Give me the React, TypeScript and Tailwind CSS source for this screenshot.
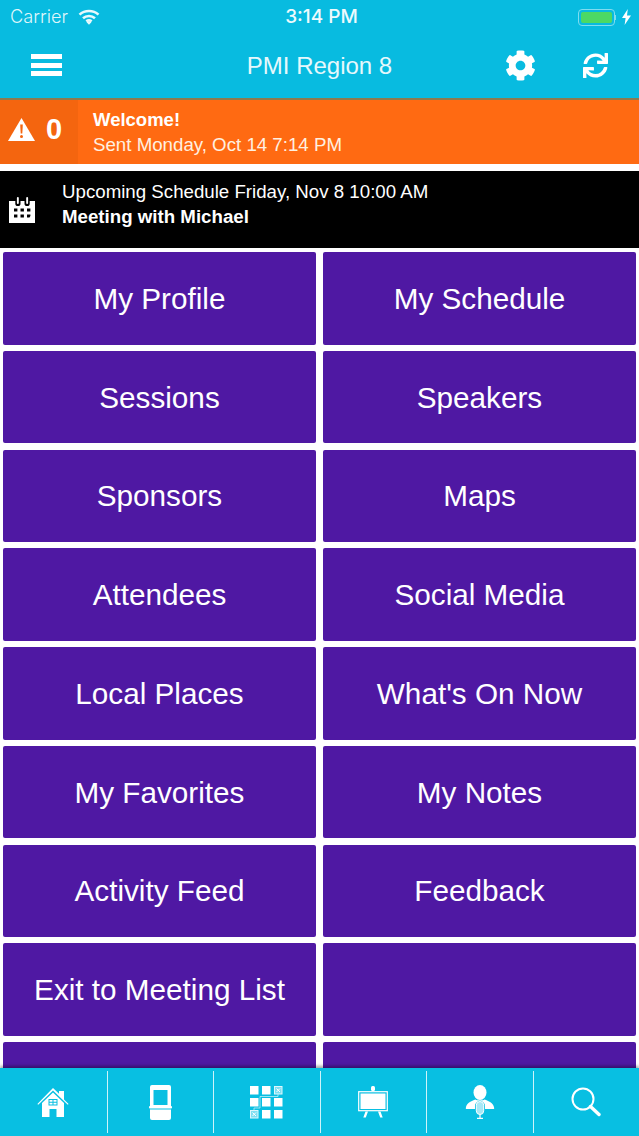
import { FaCog, FaSync } from "react-icons/fa";

const items = [
  "My Profile", "My Schedule", "Sessions", "Speakers", "Sponsors", "Maps", "Attendees", "Social Media",
  "Local Places", "What's On Now", "My Favorites", "My Notes", "Activity Feed", "Feedback", "Exit to Meeting List", "", "", "",
];

function Wifi() {
  return (
    <svg width="22" height="16" viewBox="0 0 22 16" fill="none" stroke="#e8f9fc" strokeWidth="2.6">
      <path d="M1.500 5.600C6.800.7 15.200.7 20.500 5.600" />
      <path d="M5 9.200c3.400-3 8.600-3 12 0" />
      <path d="M8.300 12.400c1.600-1.200 3.800-1.200 5.400 0" />
      <path d="M11 15.800 8.600 13.200c1.300-.9 3.500-.9 4.800 0z" fill="#e8f9fc" stroke="none" />
    </svg>
  );
}

function Battery() {
  return (
    <div className="flex items-center gap-[6px]">
      <div className="flex items-center">
        <div className="w-[37px] h-[17px] rounded-[4px] border border-[#7fdcf0] p-[2px]">
          <div className="w-full h-full rounded-[2px] bg-[#4cd964]" />
        </div>
        <div className="w-[1.5px] h-[5px] bg-[#7fdcf0]" />
      </div>
      <svg width="9" height="16" viewBox="0 0 9 16" fill="#fff">
        <path d="M5.800 0 0 9h3.600L2.600 16 9 6.400H5z" />
      </svg>
    </div>
  );
}

function Warning() {
  return (
    <svg width="27" height="23" viewBox="0 0 27 23">
      <path d="M13.500 0 27 23H0z" fill="#fff" />
      <path d="M12.200 6.500h2.600l-.5 9h-1.600z" fill="#f4650f" />
      <circle cx="13.500" cy="18.500" r="1.500" fill="#f4650f" />
    </svg>
  );
}

function Calendar() {
  return (
    <svg width="27" height="27" viewBox="0 0 27 27" fill="#fff">
      <path fillRule="evenodd" d="M0 5h6.300v2.500a2.600 2.600 0 0 0 5.200 0V5h4v2.500a2.600 2.600 0 0 0 5.200 0V5H26v22H0zM5 12.500v3h3.400v-3zm6.500 0v3h3.400v-3zm6.500 0v3h3.400v-3zM5 18.500v3h3.400v-3zm6.500 0v3h3.400v-3zm6.500 0v3h2.500l.9-1.500v-1.500z" />
      <rect x="7.900" y="1" width="1.900" height="7" rx=".95" />
      <rect x="17.200" y="1" width="1.900" height="7" rx=".95" />
    </svg>
  );
}

function Home() {
  return (
    <svg width="32" height="29" viewBox="0 0 32 29" fill="#fff">
      <path d="M22 3h5v8.600l4.600 4.400-.8.800L16 2.600 1.200 16.800l-.8-.8L16 0l6 5.700z" />
      <path fillRule="evenodd" d="M16 4.600 27 15v14h-7.500v-8h-7v8H5V15zM11.500 11v6.500h9V11z" />
      <path d="M12.500 12h3v1.800h-3zM16.500 12h3v1.800h-3zM12.500 14.800h3v1.700h-3zM16.500 14.800h3v1.700h-3z" />
    </svg>
  );
}

function Phone() {
  return (
    <svg width="23" height="35" viewBox="0 0 23 35" fill="#fff">
      <path fillRule="evenodd" d="M3 0h17a2 2 0 0 1 2 2v19H1V2a2 2 0 0 1 2-2zm1.500 5v15h14V5z" />
      <rect x="0" y="21" width="23" height="2.500" rx="1" />
      <path d="M1 24.500h21V33a2 2 0 0 1-2 2H3a2 2 0 0 1-2-2z" />
    </svg>
  );
}

function AgendaGrid() {
  const solid = [[0, 0], [12, 0], [0, 12], [12, 12], [24, 12], [12, 24], [24, 24]];
  return (
    <svg width="33" height="33" viewBox="0 0 33 33" fill="#fff">
      {solid.map(([x, y]) => (
        <rect key={`${x}-${y}`} x={x} y={y} width="8.500" height="8.500" />
      ))}
      <rect x="24.500" y=".5" width="7.500" height="7.500" fill="#7fdff2" stroke="#dff7fc" />
      <rect x=".5" y="24.500" width="7.500" height="7.500" fill="#7fdff2" stroke="#dff7fc" />
      <path d="M26.500 2.500l3.500 3.500m0-3.500-3.500 3.500M2.500 26.500l3.500 3.500m0-3.500-3.500 3.500" stroke="#fff" strokeWidth="1" />
      <path d="M28 8v2.500H10V22H4v2.500" fill="none" stroke="#bfeef8" strokeWidth=".8" />
    </svg>
  );
}

function Board() {
  return (
    <svg width="30" height="32" viewBox="0 0 30 32" fill="#fff">
      <rect x="13" y="0" width="4" height="5" rx="1.500" />
      <rect x=".7" y="5.700" width="28.600" height="19" fill="none" stroke="#fff" strokeWidth="1.200" />
      <rect x="2.500" y="7.500" width="25" height="15.500" />
      <path d="M7.500 25.500h2.500L7.800 31.500H5.300zM20 25.500h2.500l2.200 6h-2.500z" />
    </svg>
  );
}

function Speaker() {
  return (
    <svg width="30" height="34" viewBox="0 0 30 34" fill="#fff">
      <ellipse cx="15" cy="7.500" rx="6.500" ry="7.500" />
      <path d="M10.500 14.500c1.300 1.200 7.700 1.200 9 0 4 1.500 8.700 3 9.700 8.500.1.700-.2 1-.9 1H20V21a5 5 0 0 0-10 0v3H1.700c-.7 0-1-.3-.9-1 1-5.500 5.700-7 9.700-8.500z" />
      <rect x="11.300" y="16.500" width="7.400" height="13" rx="3.700" fill="#a8e7f5" stroke="#fff" strokeWidth="1" />
      <path d="M15 29.500V33M12 33.400h6" stroke="#fff" strokeWidth="1.200" fill="none" />
    </svg>
  );
}

function Search() {
  return (
    <svg width="30" height="30" viewBox="0 0 30 30" fill="none" stroke="#fff">
      <circle cx="12" cy="12" r="10.500" strokeWidth="2" />
      <path d="m19.500 19.500 8.500 8" strokeWidth="3.400" strokeLinecap="round" />
    </svg>
  );
}

const tabs = [<Home />, <Phone />, <AgendaGrid />, <Board />, <Speaker />, <Search />];

export default function App() {
  return (
    <div className="w-[639px] h-[1136px] overflow-hidden flex flex-col bg-white font-['Liberation_Sans',sans-serif]">
      <header className="h-[100px] shrink-0 flex flex-col bg-[#08bbe0] border-b-2 border-[#8c7a4e] text-white">
        <div className="h-[33px] shrink-0 flex items-center justify-between pl-[10px] pr-[8px] pt-[1px]">
          <div className="w-[200px] flex items-center gap-[10px] text-[18.2px] text-[#dff6fb] font-['Inter',sans-serif] font-light">
            <span>Carrier</span>
            <Wifi />
          </div>
          <div className="pl-[2px] text-[19px] font-medium font-['Inter',sans-serif] text-[#eefafd]">3:14 PM</div>
          <div className="w-[200px] flex justify-end">
            <Battery />
          </div>
        </div>
        <div className="flex-1 flex items-center justify-between pl-[31px] pr-[31px] pb-[1px]">
          <div className="w-[31px] flex flex-col gap-[3.500px]">
            <div className="h-[5px] bg-white" />
            <div className="h-[5px] bg-white" />
            <div className="h-[5px] bg-white" />
          </div>
          <div className="flex-1 text-center pl-[72px] pt-[2px] text-[24px] text-[#e6f8fc]">PMI Region 8</div>
          <div className="flex items-center gap-[47px]">
            <FaCog size={31} color="#fff" />
            <FaSync size={25} color="#fff" />
          </div>
        </div>
      </header>

      <section className="h-[64px] shrink-0 flex bg-[#ff6a12] text-white">
        <div className="w-[78px] shrink-0 bg-[#f4650f] flex items-center pl-[8px] gap-[11px] pb-[5px]">
          <Warning />
          <span className="text-[29px] font-bold leading-none">0</span>
        </div>
        <div className="pl-[15px] flex flex-col justify-center gap-[4px] pb-[1px]">
          <div className="text-[18.5px] font-bold leading-[21px]">Welcome!</div>
          <div className="text-[18.7px] leading-[21px] text-[#fff0e0]">Sent Monday, Oct 14 7:14 PM</div>
        </div>
      </section>

      <div className="h-[7px] shrink-0" />

      <section className="h-[77px] shrink-0 flex items-center bg-black text-white">
        <div className="w-[62px] shrink-0 pl-[9px]">
          <Calendar />
        </div>
        <div className="flex flex-col gap-[4px] pb-[12px]">
          <div className="text-[18.7px] leading-[21px]">Upcoming Schedule Friday, Nov 8 10:00 AM</div>
          <div className="text-[18.7px] font-bold leading-[21px]">Meeting with Michael</div>
        </div>
      </section>

      <main className="flex-1 min-h-0 overflow-hidden grid grid-cols-[313px_313px] auto-rows-[92.5px] gap-x-[7px] gap-y-[6.250px] px-[3px] pt-[4px] content-start">
        {items.map((t, i) => (
          <div key={i} className="flex items-center justify-center bg-[#4f18a3] rounded-[2px] pt-[2px] text-[29.7px] text-white">
            {t}
          </div>
        ))}
      </main>

      <nav className="h-[68px] shrink-0 grid grid-cols-6 bg-[#08bfe2] shadow-[0_-2px_3px_rgba(0,0,0,0.35)] relative">
        {tabs.map((icon, i) => (
          <div key={i} className="flex items-center justify-center my-[3px] border-l border-[#cdf3fa] first:border-l-0">
            {icon}
          </div>
        ))}
      </nav>
    </div>
  );
}
